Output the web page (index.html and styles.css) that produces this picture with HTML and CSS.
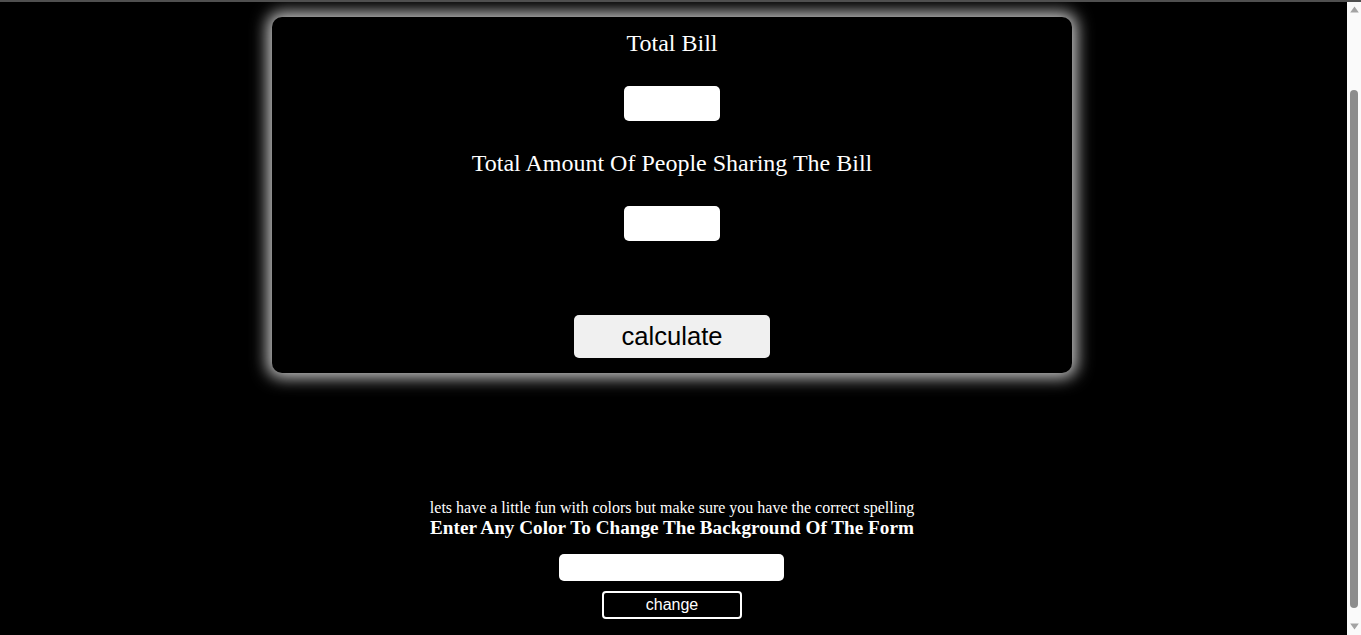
FILE: index.html
```html
<!DOCTYPE html>
<html lang="en">
<head>
<meta charset="utf-8">
<title>Bill Splitter</title>
<link rel="stylesheet" href="styles.css">
</head>
<body>
<div class="topline"></div>
<div class="shell">
  <main class="page">
    <form class="card" onsubmit="return false">
      <label class="label" for="bill">Total Bill</label>
      <input class="field" id="bill" type="text">
      <label class="label label-next" for="people">Total Amount Of People Sharing The Bill</label>
      <input class="field" id="people" type="text">
      <button class="calc" type="button">calculate</button>
    </form>
    <section class="colors">
      <p class="hint">lets have a little fun with colors but make sure you have the correct spelling</p>
      <h3 class="colors-title">Enter Any Color To Change The Background Of The Form</h3>
      <input class="color-field" type="text">
      <button class="change" type="button">change</button>
    </section>
  </main>
  <aside class="scrollbar" aria-hidden="true">
    <svg class="sb-arrow sb-up" width="9" height="7" viewBox="0 0 9 7"><path d="M4.5 0.6 L8.8 6.6 L0.2 6.6 Z" fill="#a3a3a3"/></svg>
    <div class="sb-thumb"></div>
    <svg class="sb-arrow sb-down" width="9" height="7" viewBox="0 0 9 7"><path d="M0.2 0.4 L8.8 0.4 L4.5 6.4 Z" fill="#a3a3a3"/></svg>
  </aside>
</div>
</body>
</html>
```

FILE: styles.css
```css
html, body {
  margin: 0;
  padding: 0;
  background: #000;
  overflow: hidden;
}

body {
  font-family: "Liberation Serif", "Times New Roman", serif;
  color: #fff;
}

.topline {
  height: 2px;
  background: #4f4f4f;
}

.shell {
  display: flex;
  height: 633px;
  overflow: hidden;
}

.page {
  flex: 1;
  display: flex;
  flex-direction: column;
  align-items: center;
  padding-top: 15px;
  padding-right: 3px;
}

.card {
  box-sizing: border-box;
  width: 800px;
  display: flex;
  flex-direction: column;
  align-items: center;
  padding: 12px 0 15px;
  background: #000;
  border-radius: 10px;
  box-shadow: 0 0 16px 5px #c4c4c4;
}

.label {
  font-size: 24px;
  line-height: 28px;
  color: #fff;
}

.label-next {
  margin-top: 28px;
}

.field {
  box-sizing: border-box;
  width: 96px;
  height: 35px;
  margin-top: 29px;
  border: none;
  border-radius: 5px;
  background: #fff;
  padding: 0;
}

.calc {
  box-sizing: border-box;
  width: 196px;
  height: 43px;
  margin-top: 74px;
  border: none;
  border-radius: 5px;
  background: #f0f0f0;
  color: #000;
  font-family: "Liberation Sans", Arial, sans-serif;
  font-size: 25.6px;
  padding: 0;
}

.colors {
  display: flex;
  flex-direction: column;
  align-items: center;
  margin-top: 126px;
  text-align: center;
}

.hint {
  margin: 0;
  font-size: 16px;
  line-height: 18px;
}

.colors-title {
  margin: 0;
  font-size: 19.2px;
  line-height: 21px;
  font-weight: bold;
}

.color-field {
  box-sizing: border-box;
  width: 225px;
  height: 27px;
  margin-top: 16px;
  border: none;
  border-radius: 5px;
  background: #fff;
  padding: 0;
}

.change {
  box-sizing: border-box;
  width: 140px;
  height: 28px;
  margin-top: 10px;
  border: 2px solid #fff;
  border-radius: 4px;
  background: #000;
  color: #fff;
  font-family: "Liberation Sans", Arial, sans-serif;
  font-size: 16px;
  padding: 0;
}

.scrollbar {
  width: 14px;
  flex: none;
  display: flex;
  flex-direction: column;
  background: #fafafa;
}

.sb-arrow {
  display: block;
  margin-left: 3px;
  flex: none;
}

.sb-up {
  margin-top: 4px;
}

.sb-thumb {
  flex: none;
  width: 8px;
  height: 518px;
  margin-top: 77px;
  margin-left: 3px;
  border-radius: 4px;
  background: #8c8c8c;
}

.sb-down {
  margin-top: 15px;
}
```
